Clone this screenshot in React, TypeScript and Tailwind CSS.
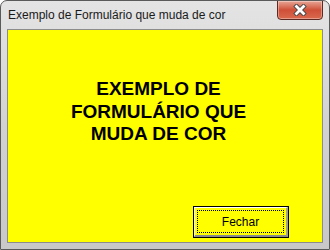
import React from "react";

export default function App() {
  return (
    <div className="w-[330px] h-[250px] flex flex-col rounded-t-[7px] border border-[#5a5a5a] bg-gradient-to-b from-[#e4e4e4] via-[#d2d2d2] to-[#c8c8c8] overflow-hidden">
      <div className="h-[28px] flex items-start shrink-0">
        <div
          className="pl-[7px] pt-[7px] text-[12px] leading-[14px] text-[#1a1a1a] flex-1"
          style={{ fontFamily: '"Liberation Sans", Arial, sans-serif' }}
        >
          Exemplo de Formulário que muda de cor
        </div>
        <div className="mr-[6px] -mt-px w-[46px] h-[20px] rounded-b-[4px] border border-[#5c2a22] bg-gradient-to-b from-[#e6a596] via-[#cf4f37] to-[#d9694d] flex items-center justify-center shadow-[inset_0_0_0_1px_rgba(255,255,255,0.35)]">
          <svg width="14" height="12" viewBox="0 0 14 12">
            <path d="M3.5 2.5 L10.5 9.5 M10.5 2.5 L3.5 9.5" stroke="#474747" strokeWidth="4.6" strokeLinecap="square" fill="none" />
            <path d="M3.5 2.5 L10.5 9.5 M10.5 2.5 L3.5 9.5" stroke="#ffffff" strokeWidth="2.8" strokeLinecap="square" fill="none" />
          </svg>
        </div>
      </div>
      <div className="mx-[6px] h-[214px] shrink-0 border border-[#8c8c8c] bg-[#ffff00] flex flex-col">
        <div
          className="w-[301px] pt-[48px] text-center font-bold text-[19px] leading-[22.5px] text-black"
          style={{ fontFamily: '"Liberation Sans", Arial, sans-serif' }}
        >
          <div>EXEMPLO DE</div>
          <div>FORMULÁRIO QUE</div>
          <div>MUDA DE COR</div>
        </div>
        <div className="mt-auto mb-[4px] mr-[33px] self-end w-[96px] h-[32px] border border-black">
          <div className="w-full h-full border-t border-l border-t-white border-l-white border-r-2 border-b-2 border-r-[#a0a0a0] border-b-[#8a8a8a] p-[2px]">
            <div
              className="w-full h-full border border-dotted border-black flex items-center justify-center text-[12px] text-black"
              style={{ fontFamily: '"Liberation Sans", Arial, sans-serif' }}
            >
              Fechar
            </div>
          </div>
        </div>
      </div>
    </div>
  );
}
